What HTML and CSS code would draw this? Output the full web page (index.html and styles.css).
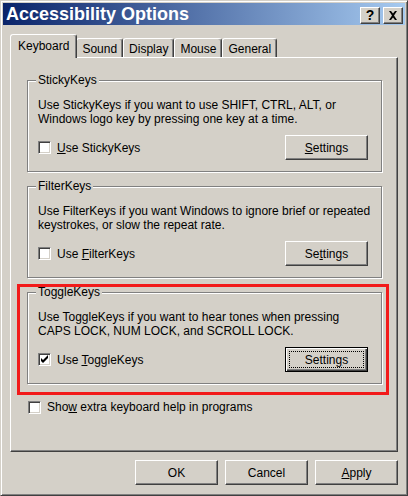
FILE: index.html
```html
<!DOCTYPE html>
<html lang="en">
<head>
<meta charset="utf-8">
<title>Accessibility Options</title>
<link rel="stylesheet" href="styles.css">
</head>
<body>
<div class="window">
  <div class="titlebar">
    <span class="title">Accessibility Options</span>
    <div class="tb-buttons">
      <span class="tb-btn help">?</span>
      <span class="tb-btn close">
        <svg width="10" height="9" viewBox="0 0 10 9"><path d="M1 0h2l2 2.5L7 0h2L6 4.5 9 9H7L5 6.5 3 9H1l3-4.5z" fill="#000"/></svg>
      </span>
    </div>
  </div>
  <div class="client">
    <div class="tabs">
      <div class="tab active">Keyboard</div>
      <div class="tab">Sound</div>
      <div class="tab">Display</div>
      <div class="tab">Mouse</div>
      <div class="tab">General</div>
    </div>
    <div class="page">
      <fieldset class="group">
        <legend>StickyKeys</legend>
        <p class="desc">Use StickyKeys if you want to use SHIFT, CTRL, ALT, or<br>Windows logo key by pressing one key at a time.</p>
        <div class="row">
          <label class="check"><span class="box"></span><span><u>U</u>se StickyKeys</span></label>
          <button class="btn"><span class="btn-label"><u>S</u>ettings</span></button>
        </div>
      </fieldset>
      <fieldset class="group">
        <legend>FilterKeys</legend>
        <p class="desc">Use FilterKeys if you want Windows to ignore brief or repeated<br>keystrokes, or slow the repeat rate.</p>
        <div class="row">
          <label class="check"><span class="box"></span><span>Use <u>F</u>ilterKeys</span></label>
          <button class="btn"><span class="btn-label">Se<u>t</u>tings</span></button>
        </div>
      </fieldset>
      <div class="highlight">
        <fieldset class="group">
          <legend>ToggleKeys</legend>
          <p class="desc">Use ToggleKeys if you want to hear tones when pressing<br>CAPS LOCK, NUM LOCK, and SCROLL LOCK.</p>
          <div class="row">
            <label class="check"><span class="box checked"><svg width="9" height="9" viewBox="0 0 9 9"><path d="M1 3v3l2 2 5-5V0L3 5z" fill="#000"/></svg></span><span>Use <u>T</u>oggleKeys</span></label>
            <button class="btn default"><span class="btn-label focus">Settin<u>g</u>s</span></button>
          </div>
        </fieldset>
      </div>
      <label class="check extra"><span class="box"></span><span>Sho<u>w</u> extra keyboard help in programs</span></label>
    </div>
    <div class="footer">
      <button class="btn"><span class="btn-label">OK</span></button>
      <button class="btn"><span class="btn-label">Cancel</span></button>
      <button class="btn"><span class="btn-label"><u>A</u>pply</span></button>
    </div>
  </div>
</div>
</body>
</html>
```

FILE: styles.css
```css
* { box-sizing: border-box; }
html, body { margin: 0; padding: 0; }
body {
  width: 408px;
  height: 496px;
  background: #d4d0c8;
  font-family: "Liberation Sans", Arial, sans-serif;
  font-size: 12px;
  color: #000;
}
.window {
  width: 408px;
  height: 496px;
  display: flex;
  flex-direction: column;
  background: #d4d0c8;
  border: 1px solid;
  border-color: #d4d0c8 #404040 #404040 #d4d0c8;
  box-shadow: inset 1px 1px #fff, inset -1px -1px #808080;
  padding: 2px;
}
.titlebar {
  flex: none;
  height: 22px;
  display: flex;
  align-items: center;
  justify-content: space-between;
  padding: 0 2px 0 3px;
  background: linear-gradient(to right, #0a246a 0%, #a6caf0 100%);
}
.title {
  color: #fff;
  font-weight: bold;
  font-size: 18px;
  line-height: 22px;
  white-space: nowrap;
}
.tb-buttons { display: flex; gap: 3px; margin-top: 2px; }
.tb-btn {
  width: 20px;
  height: 17px;
  display: flex;
  align-items: center;
  justify-content: center;
  background: #d4d0c8;
  border: 1px solid;
  border-color: #fff #404040 #404040 #fff;
  box-shadow: inset -1px -1px #808080;
  font-weight: bold;
  font-size: 14px;
  line-height: 15px;
}
.client {
  flex: 1;
  display: flex;
  flex-direction: column;
  padding: 9px 7px 8px 7px;
}
.tabs {
  flex: none;
  height: 23px;
  display: flex;
  align-items: flex-end;
  position: relative;
  z-index: 1;
}
.tab {
  height: 19px;
  padding: 3px 5px 0;
  line-height: 15px;
  background: #d4d0c8;
  border: 1px solid;
  border-bottom: none;
  border-color: #fff #404040 transparent #fff;
  border-radius: 3px 3px 0 0;
  box-shadow: inset -1px 0 #808080;
  white-space: nowrap;
}
.tab.active {
  height: 24px;
  margin-bottom: -1px;
  padding: 4px 7px 0;
  margin-right: -1px;
  position: relative;
  z-index: 2;
}
.page {
  flex: 1;
  border: 1px solid;
  border-color: #fff #404040 #404040 #fff;
  box-shadow: inset -1px -1px #808080;
  padding: 15px 15px 0 16px;
}
.group {
  margin: 0;
  min-width: 0;
  padding: 11px 13px 11px 10px;
  border: 1px solid #808080;
  box-shadow: inset 1px 1px #fff, 1px 1px #fff;
}
.group legend {
  padding: 0 2px;
  margin-left: -2px;
  line-height: 14px;
  background: #d4d0c8;
}
.group + .group, .group + .highlight { margin-top: 7px; }
.desc { margin: 0; line-height: 14px; white-space: nowrap; }
.row {
  display: flex;
  align-items: center;
  justify-content: space-between;
  margin-top: 9px;
}
.check {
  display: flex;
  align-items: center;
  gap: 6px;
  line-height: 14px;
}
.box {
  flex: none;
  width: 13px;
  height: 13px;
  display: flex;
  align-items: center;
  justify-content: center;
  background: #fff;
  border: 1px solid;
  border-color: #808080 #fff #fff #808080;
  box-shadow: inset 1px 1px #404040, inset -1px -1px #d4d0c8;
}
.btn {
  width: 83px;
  height: 25px;
  padding: 3px;
  display: flex;
  font: inherit;
  color: #000;
  background: #d4d0c8;
  border: 1px solid;
  border-color: #fff #404040 #404040 #fff;
  box-shadow: inset -1px -1px #808080;
  border-radius: 0;
}
.btn-label {
  flex: 1;
  display: flex;
  align-items: center;
  justify-content: center;
  border: 1px solid transparent;
}
.btn.default {
  border: 1px solid #000;
  box-shadow: inset 1px 1px #fff, inset -1px -1px #404040, inset -2px -2px #808080;
}
.btn-label.focus { border: 1px dotted #000; }
.highlight { position: relative; }
.highlight::after {
  content: "";
  position: absolute;
  left: -10px;
  right: -7px;
  top: -1px;
  bottom: -11px;
  border: 3px solid #f21a1a;
  pointer-events: none;
}
.extra { margin-top: 16px; margin-left: 1px; }
.footer {
  flex: none;
  display: flex;
  justify-content: flex-end;
  gap: 7px;
  margin-top: 8px;
}
```
